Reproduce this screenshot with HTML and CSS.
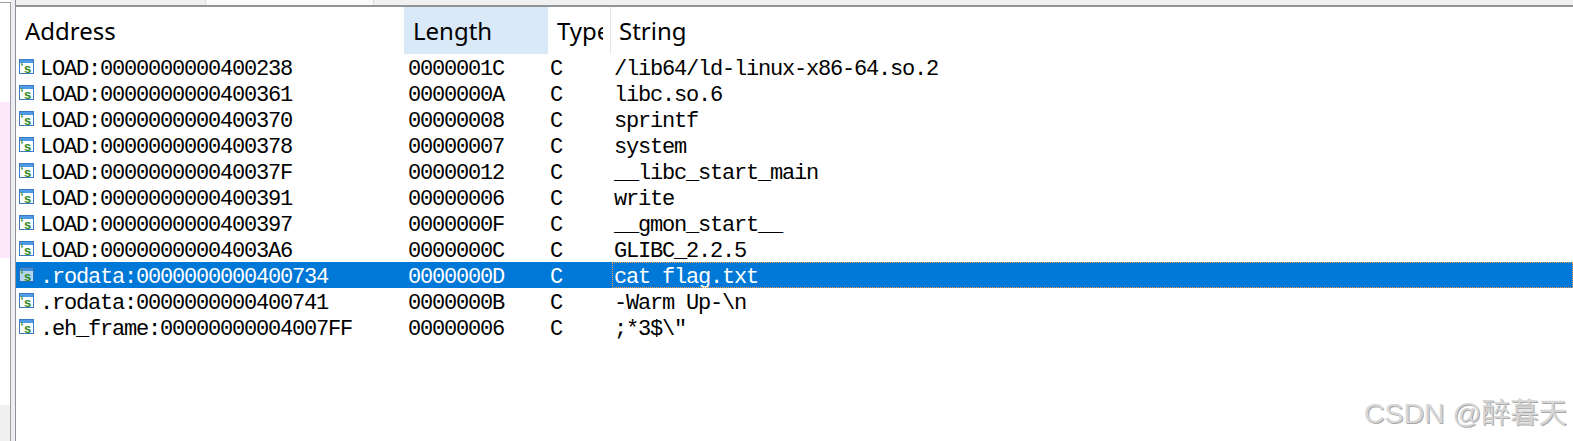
FILE: index.html
```html
<!DOCTYPE html>
<html lang="en">
<head>
  <meta charset="UTF-8">
  <title>Strings window</title>
  <link rel="stylesheet" href="styles.css">
</head>
<body>
  <div class="main">
    <div class="side">
      <div class="pink"></div>
      <div class="grey"></div>
    </div>
    <div class="gap"></div>
    <div class="panel">
      <div class="tabs">
        <div class="tab-a"></div>
        <div class="tab-b"></div>
      </div>
      <div class="strings">
        <div class="head">
          <div class="col-h">Address</div>
          <div class="col-h sorted">Length</div>
          <div class="col-h type"><span>Type</span></div>
          <div class="col-h last">String</div>
        </div>

        <div class="row">
          <div class="addr"><svg class="ico" viewBox="0 0 15 15"><rect x="0.5" y="0.5" width="14" height="14" fill="#fff" stroke="#3a7cc8"/><rect x="1" y="1" width="13" height="3" fill="#4f9be6"/><text x="1.5" y="11" class="tick">‘</text><text x="5" y="13.5" class="ess">s</text></svg>LOAD:0000000000400238</div>
          <div>0000001C</div><div>C</div><div class="str">/lib64/ld-linux-x86-64.so.2</div>
        </div>
        <div class="row">
          <div class="addr"><svg class="ico" viewBox="0 0 15 15"><rect x="0.5" y="0.5" width="14" height="14" fill="#fff" stroke="#3a7cc8"/><rect x="1" y="1" width="13" height="3" fill="#4f9be6"/><text x="1.5" y="11" class="tick">‘</text><text x="5" y="13.5" class="ess">s</text></svg>LOAD:0000000000400361</div>
          <div>0000000A</div><div>C</div><div class="str">libc.so.6</div>
        </div>
        <div class="row">
          <div class="addr"><svg class="ico" viewBox="0 0 15 15"><rect x="0.5" y="0.5" width="14" height="14" fill="#fff" stroke="#3a7cc8"/><rect x="1" y="1" width="13" height="3" fill="#4f9be6"/><text x="1.5" y="11" class="tick">‘</text><text x="5" y="13.5" class="ess">s</text></svg>LOAD:0000000000400370</div>
          <div>00000008</div><div>C</div><div class="str">sprintf</div>
        </div>
        <div class="row">
          <div class="addr"><svg class="ico" viewBox="0 0 15 15"><rect x="0.5" y="0.5" width="14" height="14" fill="#fff" stroke="#3a7cc8"/><rect x="1" y="1" width="13" height="3" fill="#4f9be6"/><text x="1.5" y="11" class="tick">‘</text><text x="5" y="13.5" class="ess">s</text></svg>LOAD:0000000000400378</div>
          <div>00000007</div><div>C</div><div class="str">system</div>
        </div>
        <div class="row">
          <div class="addr"><svg class="ico" viewBox="0 0 15 15"><rect x="0.5" y="0.5" width="14" height="14" fill="#fff" stroke="#3a7cc8"/><rect x="1" y="1" width="13" height="3" fill="#4f9be6"/><text x="1.5" y="11" class="tick">‘</text><text x="5" y="13.5" class="ess">s</text></svg>LOAD:000000000040037F</div>
          <div>00000012</div><div>C</div><div class="str">__libc_start_main</div>
        </div>
        <div class="row">
          <div class="addr"><svg class="ico" viewBox="0 0 15 15"><rect x="0.5" y="0.5" width="14" height="14" fill="#fff" stroke="#3a7cc8"/><rect x="1" y="1" width="13" height="3" fill="#4f9be6"/><text x="1.5" y="11" class="tick">‘</text><text x="5" y="13.5" class="ess">s</text></svg>LOAD:0000000000400391</div>
          <div>00000006</div><div>C</div><div class="str">write</div>
        </div>
        <div class="row">
          <div class="addr"><svg class="ico" viewBox="0 0 15 15"><rect x="0.5" y="0.5" width="14" height="14" fill="#fff" stroke="#3a7cc8"/><rect x="1" y="1" width="13" height="3" fill="#4f9be6"/><text x="1.5" y="11" class="tick">‘</text><text x="5" y="13.5" class="ess">s</text></svg>LOAD:0000000000400397</div>
          <div>0000000F</div><div>C</div><div class="str">__gmon_start__</div>
        </div>
        <div class="row">
          <div class="addr"><svg class="ico" viewBox="0 0 15 15"><rect x="0.5" y="0.5" width="14" height="14" fill="#fff" stroke="#3a7cc8"/><rect x="1" y="1" width="13" height="3" fill="#4f9be6"/><text x="1.5" y="11" class="tick">‘</text><text x="5" y="13.5" class="ess">s</text></svg>LOAD:00000000004003A6</div>
          <div>0000000C</div><div>C</div><div class="str">GLIBC_2.2.5</div>
        </div>
        <div class="row selected">
          <div class="addr"><svg class="ico" viewBox="0 0 15 15"><rect x="0.5" y="0.5" width="14" height="14" fill="#b5d5f0" stroke="#2f6fb8"/><rect x="1" y="1" width="13" height="3" fill="#3f8fd8"/><text x="1.5" y="11" class="tick">‘</text><text x="5" y="13.5" class="ess">s</text></svg>.rodata:0000000000400734</div>
          <div>0000000D</div><div>C</div><div class="str focus">cat flag.txt</div>
        </div>
        <div class="row">
          <div class="addr"><svg class="ico" viewBox="0 0 15 15"><rect x="0.5" y="0.5" width="14" height="14" fill="#fff" stroke="#3a7cc8"/><rect x="1" y="1" width="13" height="3" fill="#4f9be6"/><text x="1.5" y="11" class="tick">‘</text><text x="5" y="13.5" class="ess">s</text></svg>.rodata:0000000000400741</div>
          <div>0000000B</div><div>C</div><div class="str">-Warm Up-\n</div>
        </div>
        <div class="row">
          <div class="addr"><svg class="ico" viewBox="0 0 15 15"><rect x="0.5" y="0.5" width="14" height="14" fill="#fff" stroke="#3a7cc8"/><rect x="1" y="1" width="13" height="3" fill="#4f9be6"/><text x="1.5" y="11" class="tick">‘</text><text x="5" y="13.5" class="ess">s</text></svg>.eh_frame:00000000004007FF</div>
          <div>00000006</div><div>C</div><div class="str">;*3$\"</div>
        </div>
      </div>
    </div>
  </div>

  <div class="mark">CSDN @醉暮天</div>
</body>
</html>
```

FILE: styles.css
```css
html, body {
  margin: 0;
  height: 441px;
  overflow: hidden;
  background: #fff;
}
.main {
  display: flex;
  height: 441px;
}
.side {
  display: flex;
  flex-direction: column;
  width: 10px;
  margin-top: 2px;
  border-top: 1px solid #9a9ca6;
  border-right: 1px solid #9a9ca6;
}
.pink {
  height: 156px;
  margin-top: 99px;
  background: #fde8fb;
}
.grey {
  height: 36px;
  margin-top: 147px;
  background: #f0f0f0;
}
.gap {
  width: 4px;
  background: #eeeef2;
  border-right: 1px solid #8f929c;
}
.panel {
  flex: 1;
  display: flex;
  flex-direction: column;
}
.tabs {
  display: flex;
  flex: none;
  height: 5px;
  background: #f0f0f0;
  border-bottom: 2px solid #8f9499;
}
.tab-a {
  width: 189px;
}
.tab-b {
  width: 167px;
  background: #fafafa;
  border-left: 1px solid #ddd;
  border-right: 1px solid #ddd;
}
.strings {
  flex: 1;
  font-family: "Liberation Mono", monospace;
  font-size: 22px;
  letter-spacing: -1.2px;
  color: #000;
}
.head {
  display: grid;
  grid-template-columns: 388px 144px 63px 1fr;
  height: 47px;
  font-family: "Noto Sans", sans-serif;
  font-size: 24px;
  letter-spacing: 0;
  line-height: 47px;
}
.col-h {
  padding-left: 9px;
  white-space: nowrap;
}
.sorted {
  background: #d9e9f8;
}
.type {
  padding-right: 7px;
  border-right: 1px solid #e5e5e5;
}
.type span {
  display: block;
  overflow: hidden;
}
.last {
  padding-left: 8px;
}
.row {
  display: grid;
  grid-template-columns: 388px 146px 62px 1fr;
  grid-template-rows: 26px;
  height: 26px;
  line-height: 32px;
  white-space: nowrap;
}
.row > div:nth-child(2) {
  padding-left: 4px;
}
.addr {
  display: flex;
  align-items: flex-start;
  padding-left: 3px;
}
.ico {
  width: 15px;
  height: 15px;
  margin-top: 5px;
  margin-right: 6px;
}
.tick {
  font-family: "Liberation Sans", sans-serif;
  font-size: 11px;
  font-weight: bold;
  letter-spacing: 0;
  fill: #2f8a1e;
}
.ess {
  font-family: "Liberation Sans", sans-serif;
  font-size: 13px;
  font-weight: bold;
  letter-spacing: 0;
  fill: #2f8a1e;
}
.str {
  padding-left: 2px;
}
.selected {
  background: #0078d7;
  color: #fff;
}
.focus {
  outline: 1px dotted #e8a050;
  outline-offset: -1px;
}
.mark {
  position: absolute;
  right: 6px;
  bottom: 10px;
  font-family: "Liberation Sans", "Noto Sans CJK SC", sans-serif;
  font-size: 28.5px;
  color: #d6d6d6;
  text-shadow: 1px 1px 0 #a8a8a8, -1px -1px 0 #fff;
}
```
